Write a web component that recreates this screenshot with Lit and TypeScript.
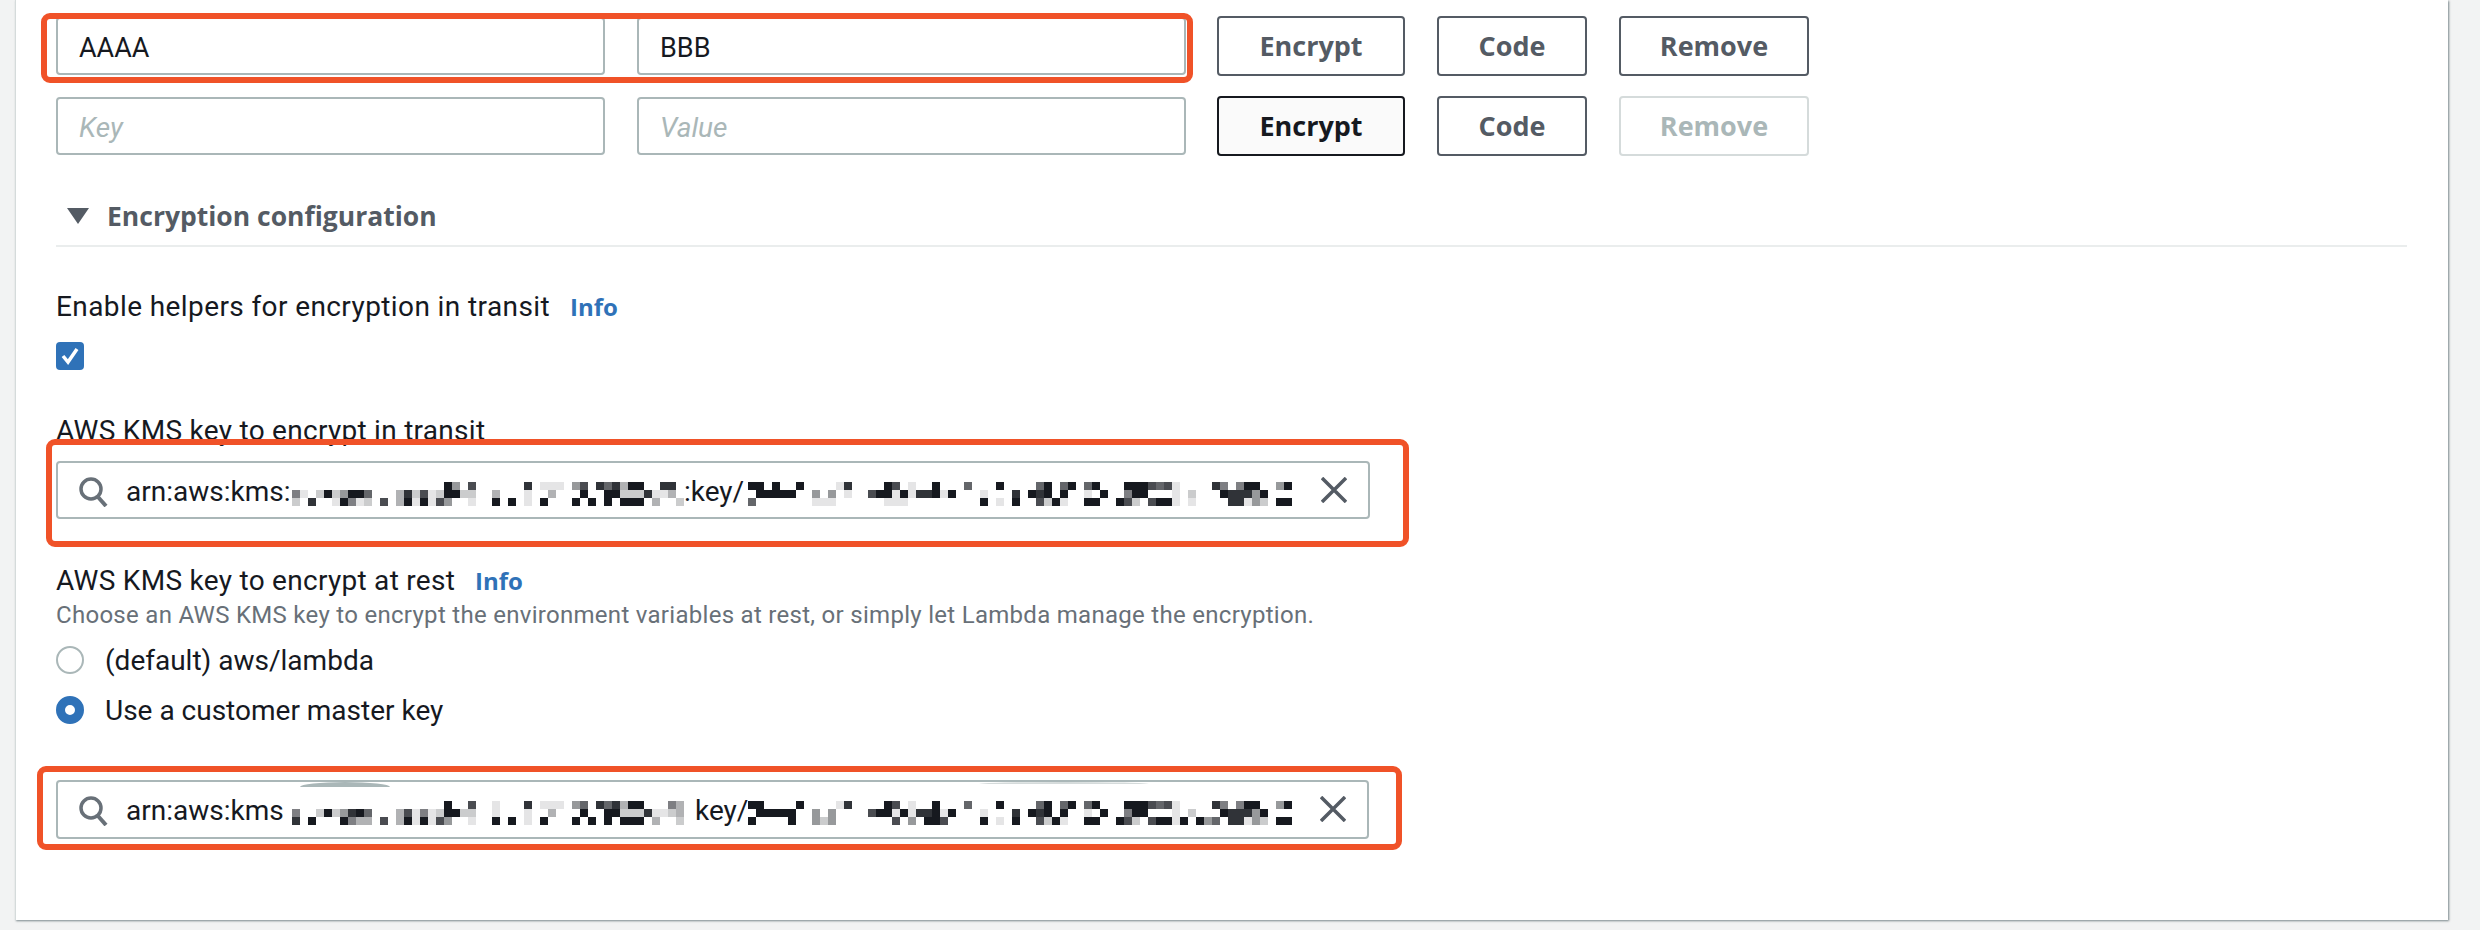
import { LitElement, css, html, svg } from 'lit';
import { customElement } from 'lit/decorators.js';

// redacted key parts: each char is a cell, '.' is white, 1-9 goes towards #16191f
// spaces only group the cells so they can be counted
const BAR_1 = {
  a: [
    '.......... .........9 4.7......8 .111.47.86 8399..88.',
    '51.2924996 ...3827129 922..3...1 ..3...9..9 92228113.',
    '2.8..19512 .7.3919174 ..1..9.9.1 .9...9.9.9 .999.3..2',
  ],
  b: [
    '99. 9..9....18 ....97.1.. 9...6...9. ...69.69.6 9...999767 1....85.59 9..49',
    '.99 999..4.4.1 ..79919188 919...1... 8.989.9..1 .9..599... 1.2...9888 49...',
    '6.. .....111.. ....111... ......9.1. 9..7291..9 9..972.799 1.1....881 42.99',
  ],
};

const BAR_2 = {
  a: [
    '.......... .........9 ..7..1...8 .111.46.86 8399...53',
    '5..2924896 ...3715129 922..1...1 ..3...9..9 922281123',
    '8.9...9533 .7.3919174 ..1..9.9.1 .9...9.9.9 .999.3..2',
  ],
  b: [
    '99. ...9....18 ....97.1.. 9...6...9. ...69.69.6 9...999767 1....85.59 9..49',
    '.99 999..4.4.. ..79919188 919...1... 8.989.9..1 .9..599... 1.2...9888 49...',
    '9.. ..9..424.. .....7.4.9 97....9.1. 9..7291..9 9..972.799 19.946.881 42.99',
  ],
};

const CELL = 8;

function cellColor(level: number) {
  const mix = (from: number, to: number) => Math.round(from + (to - from) * (level / 9));
  return `rgb(${mix(255, 22)},${mix(255, 25)},${mix(255, 31)})`;
}

function mosaic(groups: string[]) {
  const rows = groups.map((r) => r.replace(/ /g, ''));
  const cols = Math.max(...rows.map((r) => r.length));
  return html`<svg class="mosaic" width=${cols * CELL} height=${rows.length * CELL} shape-rendering="crispEdges">
    ${rows.map((row, y) =>
      [...row].map((c, x) =>
        c === '.'
          ? null
          : svg`<rect x=${x * CELL} y=${y * CELL} width=${CELL} height=${CELL} fill=${cellColor(Number(c))}></rect>`,
      ),
    )}
  </svg>`;
}

const searchIcon = html`<svg class="search-icon" width="30" height="30" viewBox="0 0 30 30" fill="none" stroke="#687078" stroke-width="3.5">
  <circle cx="13" cy="12" r="10"></circle>
  <path d="M20 20l8 9" stroke-width="4"></path>
</svg>`;

const clearIcon = html`<svg class="clear-icon" width="26" height="26" viewBox="0 0 26 26" fill="none" stroke="#545b64" stroke-width="3.5">
  <path d="M1 1l24 24M25 1L1 25"></path>
</svg>`;

@customElement('app-root')
export class AppRoot extends LitElement {
  static styles = css`
    :host {
      display: block;
      width: 2480px;
      height: 930px;
      overflow: hidden;
      background: #f2f3f3;
      font-family: 'Roboto', 'Noto Sans', sans-serif;
      font-size: 28px;
      color: #16191f;
    }
    .card {
      box-sizing: border-box;
      width: 2433px;
      height: 920px;
      margin-left: 15px;
      padding: 16px 41px 0 40px;
      background: #fff;
      border-left: 1px solid #d5dbdb;
      box-shadow: 1px 1px 2px rgba(0, 28, 36, 0.5);
    }
    .kv-row {
      display: flex;
      align-items: center;
      height: 60px;
      margin-bottom: 20px;
    }
    .kv-fields {
      position: relative;
      display: flex;
      align-items: center;
      gap: 32px;
      height: 60px;
      margin-right: 31px;
    }
    .text-input {
      box-sizing: border-box;
      display: flex;
      align-items: center;
      width: 549px;
      height: 58px;
      padding: 3px 0 0 21px;
      border: 2px solid #aab7b8;
      border-radius: 4px;
      font-size: 27px;
    }
    .placeholder {
      color: #aab7b8;
      font-size: 28px;
      font-style: italic;
    }
    .btn {
      box-sizing: border-box;
      display: flex;
      align-items: center;
      justify-content: center;
      height: 60px;
      margin-right: 32px;
      padding-bottom: 2px;
      border: 2px solid #545b64;
      border-radius: 4px;
      color: #545b64;
      font-family: 'Open Sans', 'Noto Sans', sans-serif;
      font-size: 27px;
      font-weight: 700;
    }
    .btn.encrypt {
      width: 188px;
    }
    .btn.code {
      width: 150px;
    }
    .btn.remove {
      width: 190px;
      margin-right: 0;
    }
    .btn.focused {
      border-color: #16191f;
      background: #fafafa;
      color: #16191f;
    }
    .btn.disabled {
      border-color: #d5dbdb;
      color: #aab7b8;
    }
    .section-head {
      display: flex;
      align-items: center;
      height: 46px;
      margin-top: 37px;
      border-bottom: 2px solid #eaeded;
      padding-bottom: 6px;
      color: #545b64;
      font-family: 'Open Sans', 'Noto Sans', sans-serif;
      font-size: 26.5px;
      font-weight: 700;
    }
    .caret {
      width: 0;
      height: 0;
      margin: 0 18px 0 11px;
      border-left: 11px solid transparent;
      border-right: 11px solid transparent;
      border-top: 16px solid #545b64;
    }
    .label {
      height: 34px;
      line-height: 34px;
      letter-spacing: 0.28px;
      white-space: nowrap;
    }
    .info {
      letter-spacing: 0;
      color: #2f72b8;
      font-family: 'Open Sans', 'Noto Sans', sans-serif;
      font-weight: 700;
      font-size: 24px;
    }
    .label.first {
      margin-top: 43px;
      letter-spacing: 0.4px;
    }
    .label.first .info {
      margin-left: 20px;
    }
    .label.kms-transit {
      margin-top: 44px;
      margin-bottom: 13px;
    }
    .label.kms-rest {
      margin-top: 45px;
    }
    .label.kms-rest .info {
      margin-left: 20px;
    }
    .desc {
      height: 30px;
      line-height: 30px;
      margin-top: 2px;
      color: #687078;
      font-size: 24px;
      letter-spacing: 0.29px;
      white-space: nowrap;
    }
    .checkbox {
      display: flex;
      align-items: center;
      justify-content: center;
      width: 28px;
      height: 28px;
      margin-top: 18px;
      border-radius: 4px;
      background: #2f72b8;
    }
    .radio-row {
      display: flex;
      align-items: center;
      gap: 21px;
      height: 28px;
    }
    .radio-row.one {
      margin-top: 16px;
    }
    .radio-row.two {
      margin-top: 22px;
    }
    .radio {
      box-sizing: border-box;
      width: 28px;
      height: 28px;
      border: 2px solid #aab7b8;
      border-radius: 50%;
    }
    .radio.on {
      border: 9px solid #2f72b8;
    }
    .search {
      position: relative;
      box-sizing: border-box;
      display: flex;
      align-items: flex-start;
      width: 1314px;
      height: 58px;
      padding-left: 20px;
      border: 2px solid #aab7b8;
      border-radius: 4px;
      white-space: nowrap;
    }
    .search.rest {
      width: 1313px;
      height: 59px;
      margin-top: 56px;
    }
    .search-icon {
      flex: none;
      margin: 14px 18px 0 0;
    }
    .arn {
      flex: none;
      width: 166px;
      line-height: 54px;
      margin-top: 2px;
    }
    .arn.key {
      width: 64px;
    }
    .arn.key.shifted {
      box-sizing: border-box;
      padding-left: 11px;
    }
    .mosaic {
      flex: none;
      display: block;
      margin-top: 19px;
    }
    .clear-icon {
      position: absolute;
      top: 14px;
      right: 21px;
    }
    /* scan smudges on top of the rest field */
    .smudge {
      position: absolute;
      top: 0;
      height: 5px;
      background: #aab7b8;
      border-radius: 50% 50% 0 0 / 100% 100% 0 0;
    }
    .smudge.big {
      left: 242px;
      width: 90px;
    }
    .smudge.thin {
      left: 921px;
      width: 170px;
      height: 2px;
      background: #d5dbdb;
    }
    /* annotation rectangles drawn over the screenshot */
    .mark {
      position: absolute;
      box-sizing: border-box;
      border: 6px solid #f05228;
      border-radius: 9px;
      pointer-events: none;
    }
    .mark.kv {
      inset: -3px -7px -7px -15px;
    }
    .mark.transit {
      inset: -24px -41px -30px -12px;
    }
    .mark.rest {
      inset: -16px -35px -13px -21px;
    }
  `;

  private kvButtons(focused: boolean, removable: boolean) {
    return html`
      <div class="btn encrypt ${focused ? 'focused' : ''}">Encrypt</div>
      <div class="btn code">Code</div>
      <div class="btn remove ${removable ? '' : 'disabled'}">Remove</div>
    `;
  }

  render() {
    return html`<div class="card">
      <div class="kv-row">
        <div class="kv-fields">
          <div class="text-input">AAAA</div>
          <div class="text-input">BBB</div>
          <div class="mark kv"></div>
        </div>
        ${this.kvButtons(false, true)}
      </div>
      <div class="kv-row">
        <div class="kv-fields">
          <div class="text-input"><span class="placeholder">Key</span></div>
          <div class="text-input"><span class="placeholder">Value</span></div>
        </div>
        ${this.kvButtons(true, false)}
      </div>

      <div class="section-head"><span class="caret"></span>Encryption configuration</div>

      <div class="label first">Enable helpers for encryption in transit<span class="info">Info</span></div>
      <div class="checkbox">
        <svg width="18" height="18" viewBox="0 0 18 18" fill="none" stroke="#fff" stroke-width="3.5">
          <path d="M2 9l5 6 9-13"></path>
        </svg>
      </div>

      <div class="label kms-transit">AWS KMS key to encrypt in transit</div>
      <div class="search">
        ${searchIcon}
        <span class="arn">arn:aws:kms:</span>
        ${mosaic(BAR_1.a)}
        <span class="arn key">:key/</span>
        ${mosaic(BAR_1.b)}
        ${clearIcon}
        <div class="mark transit"></div>
      </div>

      <div class="label kms-rest">AWS KMS key to encrypt at rest<span class="info">Info</span></div>
      <div class="desc">Choose an AWS KMS key to encrypt the environment variables at rest, or simply let Lambda manage the encryption.</div>
      <div class="radio-row one"><span class="radio"></span>(default) aws/lambda</div>
      <div class="radio-row two"><span class="radio on"></span>Use a customer master key</div>

      <div class="search rest">
        <span class="smudge big"></span>
        <span class="smudge thin"></span>
        ${searchIcon}
        <span class="arn">arn:aws:kms</span>
        ${mosaic(BAR_2.a)}
        <span class="arn key shifted">key/</span>
        ${mosaic(BAR_2.b)}
        ${clearIcon}
        <div class="mark rest"></div>
      </div>
    </div>`;
  }
}
